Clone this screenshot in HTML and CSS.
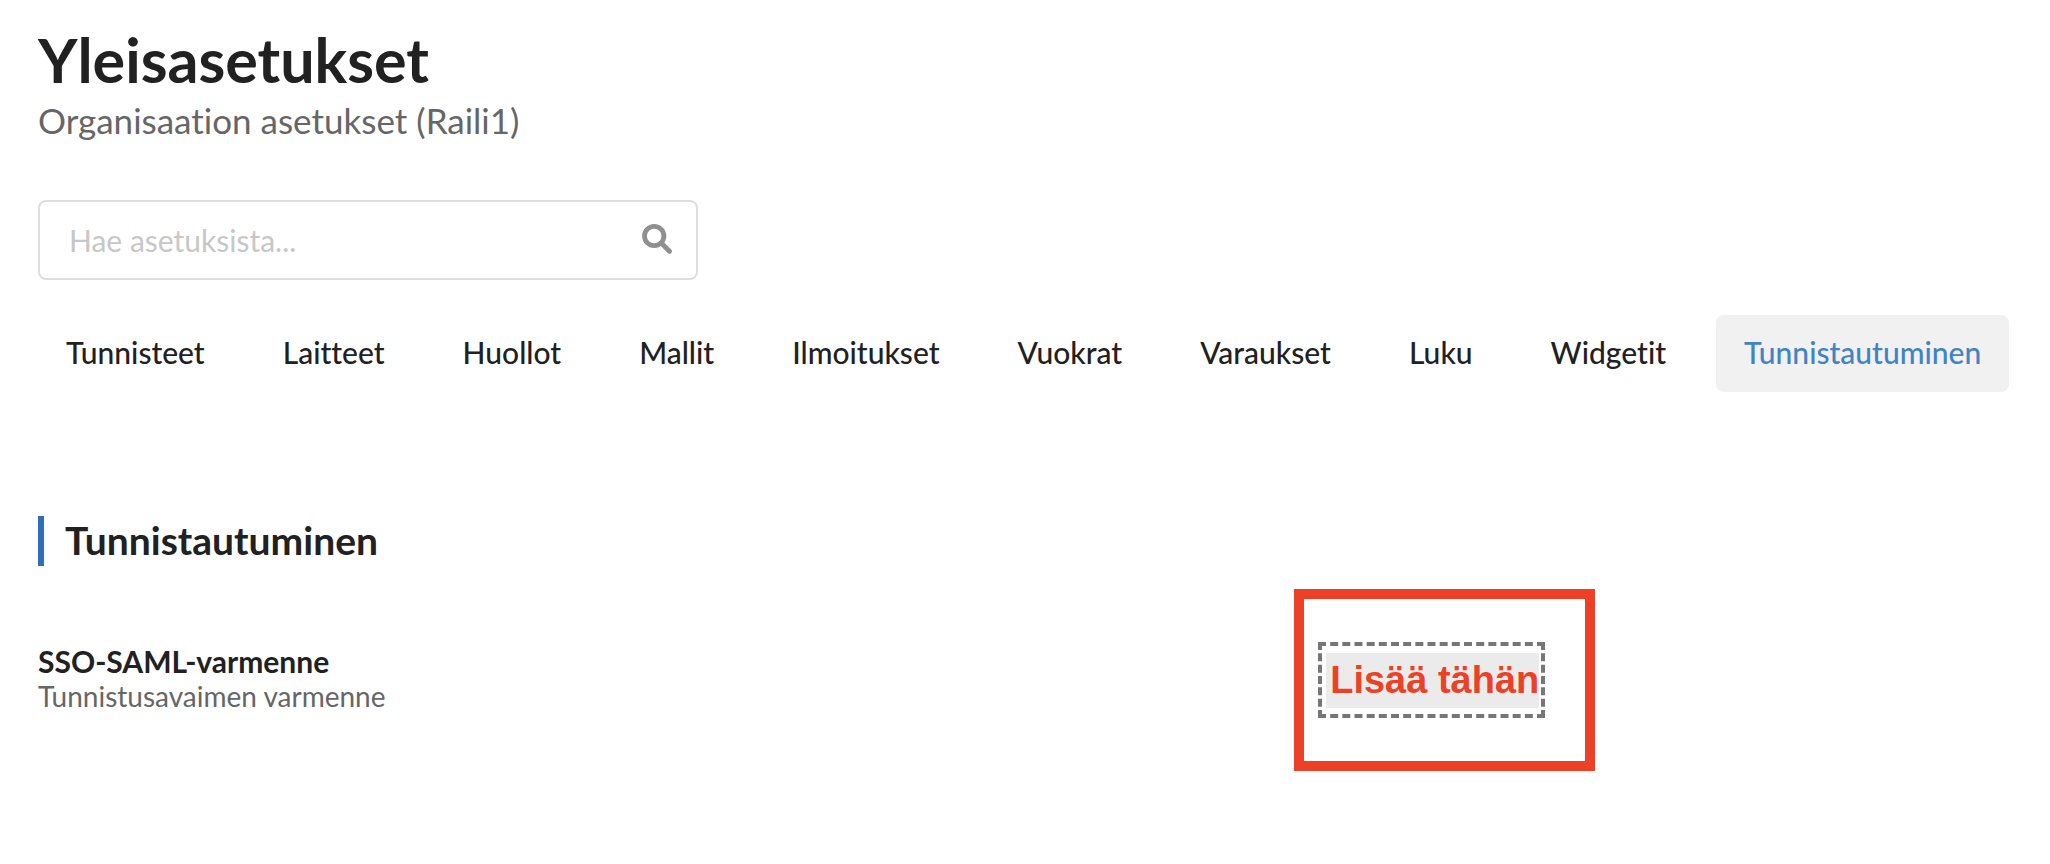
FILE: index.html
```html
<!DOCTYPE html>
<html lang="fi">
<head>
<meta charset="utf-8">
<title>Yleisasetukset</title>
<link rel="stylesheet" href="styles.css">
</head>
<body>
<main class="page">
  <header class="page-header">
    <h1 class="page-title">Yleisasetukset</h1>
    <p class="page-subtitle">Organisaation asetukset (Raili1)</p>
  </header>
  <form class="search" role="search">
    <input class="search-input" type="text" placeholder="Hae asetuksista..." aria-label="Hae asetuksista">
    <svg class="search-icon" viewBox="0 0 30 30" aria-hidden="true">
      <circle cx="12.2" cy="11" r="9.7" fill="none" stroke="currentColor" stroke-width="4.8"/>
      <path d="M19.5 18.3 27.5 26.3" stroke="currentColor" stroke-width="5" stroke-linecap="round"/>
    </svg>
  </form>
  <nav class="tabs" aria-label="Asetukset">
    <a class="tab" href="#tunnisteet">Tunnisteet</a>
    <a class="tab" href="#laitteet">Laitteet</a>
    <a class="tab" href="#huollot">Huollot</a>
    <a class="tab" href="#mallit">Mallit</a>
    <a class="tab" href="#ilmoitukset">Ilmoitukset</a>
    <a class="tab" href="#vuokrat">Vuokrat</a>
    <a class="tab" href="#varaukset">Varaukset</a>
    <a class="tab" href="#luku">Luku</a>
    <a class="tab" href="#widgetit">Widgetit</a>
    <a class="tab tab-active" href="#tunnistautuminen" aria-current="page">Tunnistautuminen</a>
  </nav>
  <section class="section" id="tunnistautuminen">
    <h2 class="section-title">Tunnistautuminen</h2>
    <div class="setting">
      <div class="setting-info">
        <h3 class="setting-name">SSO-SAML-varmenne</h3>
        <p class="setting-description">Tunnistusavaimen varmenne</p>
      </div>
      <div class="highlight">
        <button class="dropzone" type="button"><span class="dropzone-label">Lisää tähän</span></button>
      </div>
    </div>
  </section>
</main>
</body>
</html>
```
FILE: styles.css
```css
* { box-sizing: border-box; }

body {
  margin: 0;
  background: #fff;
  color: #212121;
  font-family: Lato, "Liberation Sans", sans-serif;
  font-size: 30px;
  line-height: 36px;
  font-variant-ligatures: none;
}

h1, h2, h3, p { margin: 0; }

.page { padding: 22px 38px; }

.page-title {
  font-size: 61px;
  line-height: 76px;
  font-weight: 700;
}

.page-subtitle {
  color: #666;
  font-size: 35px;
  line-height: 44px;
}

.search {
  display: flex;
  align-items: center;
  gap: 16px;
  max-width: 660px;
  height: 80px;
  margin-top: 58px;
  padding: 0 24px 0 29px;
  border: 2px solid #dedede;
  border-radius: 8px;
}

.search-input {
  flex: 1;
  min-width: 0;
  padding: 0;
  border: 0;
  outline: 0;
  background: none;
  color: inherit;
  font: inherit;
}

.search-input::placeholder { color: #c7c7c7; opacity: 1; }

.search-icon {
  width: 30px;
  height: 30px;
  overflow: visible;
  color: #909090;
}

.tabs {
  display: flex;
  flex-wrap: wrap;
  gap: 22px;
  margin: 35px -20px 0 0;
}

.tab {
  padding: 19px 28px 22px;
  border-radius: 8px;
  color: #212121;
  font-weight: 500;
  text-decoration: none;
}

.tab-active {
  background: #f1f1f1;
  color: #4183c4;
}

.section { margin-top: 124px; }

.section-title {
  padding: 0 0 2px 21px;
  border-left: 6px solid #2f6eb8;
  font-size: 39px;
  line-height: 48px;
  font-weight: 700;
}

.setting {
  display: grid;
  grid-template-columns: 7fr 4fr;
  align-items: center;
  margin-top: 23px;
}

.setting-info { padding-bottom: 4px; }

.setting-name {
  font-size: 30px;
  line-height: 36px;
  font-weight: 700;
}

.setting-description {
  color: #666;
  font-size: 28px;
  line-height: 34px;
}

.highlight {
  justify-self: start;
  padding: 43px 40px 43px 14px;
  border: 10px solid #ec4127;
}

.dropzone {
  display: block;
  padding: 7px 2px 6px 4px;
  border: 4px dashed #767676;
  background: #fff;
}

.dropzone-label {
  display: block;
  padding-left: 4px;
  background: #ebebeb;
  color: #ec4127;
  font: 700 38px/55px "Liberation Sans", sans-serif;
}
```
